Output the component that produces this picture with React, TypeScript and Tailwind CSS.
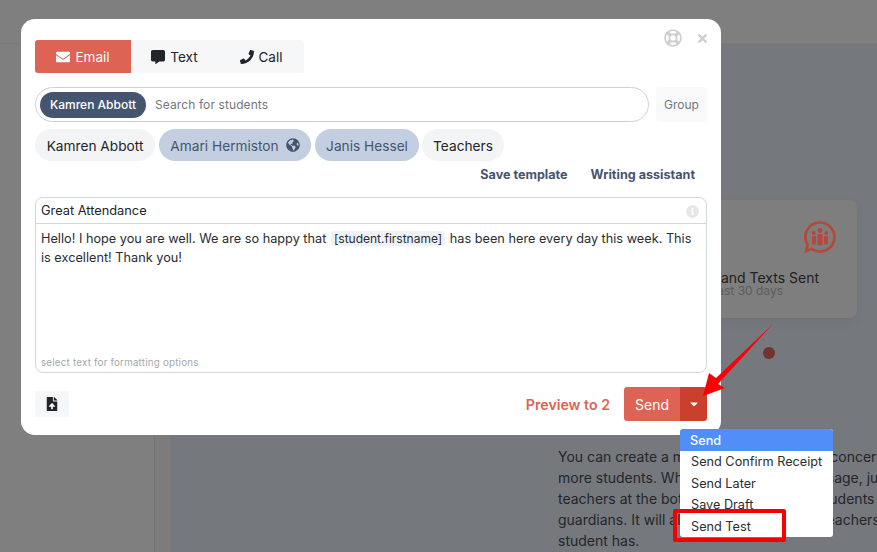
import React from "react";
import { FaEnvelope, FaCommentAlt, FaPhone, FaGlobeAmericas, FaRegLifeRing, FaTimes, FaFileUpload, FaCaretDown, FaInfoCircle } from "react-icons/fa";

const font = { fontFamily: "Inter, 'Liberation Sans', sans-serif" };

function CardIcon() {
  return (
    <svg width="32" height="32" viewBox="0 0 32 32" fill="none">
      <path d="M16 1.5a14.5 14.5 0 1 1-8.6 26.2L2 30l1.6-6.4A14.5 14.5 0 0 1 16 1.5z" stroke="#b4483a" strokeWidth="2.6" />
      <circle cx="16" cy="9.5" r="2.4" fill="#b4483a" />
      <circle cx="9.8" cy="12" r="1.9" fill="#b4483a" />
      <circle cx="22.2" cy="12" r="1.9" fill="#b4483a" />
      <rect x="13.4" y="13" width="5.2" height="11.5" rx="1.4" fill="#b4483a" />
      <rect x="8" y="15" width="4" height="8.5" rx="1.2" fill="#b4483a" />
      <rect x="20" y="15" width="4" height="8.5" rx="1.2" fill="#b4483a" />
    </svg>
  );
}

export default function App() {
  return (
    <div className="relative w-[877px] h-[552px] overflow-hidden bg-[#75787d] text-[#212529]" style={font}>
      {/* page behind the overlay */}
      <div className="h-[44px] bg-[#7f7f7f] border-b border-[#7a7a7c]" />
      <div className="flex h-[508px]">
        <div className="w-[155px] bg-[#7f7f7f] border-r border-[#747474]" />
        <div className="w-[15px] bg-[#7d7b7b]" />
        <div className="flex-1 flex flex-col items-end pr-[20px] pt-[155px] overflow-hidden">
          <div className="w-[400px] h-[118px] mt-[1px] rounded-lg bg-[#7e7e7e] shadow-[0_4px_12px_rgba(0,0,0,0.05)] flex flex-col items-end pr-[21px] pt-[21px] shrink-0">
            <CardIcon />
            <div className="mt-[16px] w-full pr-[17px] text-right text-[14px] leading-[18px] text-[#1f1f1f]">and Texts Sent</div>
            <div className="w-full pr-[53px] text-right text-[12px] leading-[8px] text-[#5d5d5d]">ast 30 days</div>
          </div>
          <div className="w-[12px] h-[12px] rounded-full bg-[#6f342e] mt-[29px] mr-[82px] shrink-0" />
          <div className="w-[299px] mt-[87px] text-[14px] leading-[21px] text-[#24262a] whitespace-nowrap shrink-0">
            <div>You can create a message to share a big concern</div>
            <div>more students. When you set a new message, just</div>
            <div>teachers at the bottom and choose the students</div>
            <div>guardians. It will also send out to all the teachers</div>
            <div>student has.</div>
          </div>
        </div>
      </div>

      {/* modal */}
      <div className="absolute left-[21px] top-[19px] w-[700px] h-[416px] bg-white rounded-[14px] px-[14px] pt-[21px]">
        <div className="absolute right-[12px] top-[10px] flex items-center gap-[14px] text-[#cfcfcf]">
          <FaRegLifeRing className="text-[18px]" />
          <FaTimes className="text-[13px]" />
        </div>

        <div className="flex w-[269px] h-[33px] rounded-[3px] bg-[#f6f7f9] text-[13.5px] overflow-hidden">
          <div className="w-[96px] pt-[1px] flex items-center justify-center gap-[5px] bg-[#dd6354] text-white">
            <FaEnvelope className="text-[14px]" /> Email
          </div>
          <div className="w-[87px] pt-[1px] flex items-center justify-center gap-[5px]">
            <FaCommentAlt className="text-[14px]" /> Text
          </div>
          <div className="w-[86px] pt-[1px] flex items-center justify-center gap-[5px]">
            <FaPhone className="text-[14px]" /> Call
          </div>
        </div>

        <div className="flex gap-[7px] mt-[14px]">
          <div className="w-[614px] h-[35px] rounded-full border border-[#ccd2dd] flex items-center pl-[4px]">
            <span className="h-[26px] w-[106px] rounded-full bg-[#45556f] text-white text-[12px] font-medium flex items-center justify-center">Kamren Abbott</span>
            <span className="ml-[9px] text-[12px] tracking-[0.1px] text-[#74777c]">Search for students</span>
          </div>
          <div className="w-[51px] h-[35px] rounded-[3px] bg-[#f8f9fb] text-[12px] text-[#74777c] flex items-center justify-center">Group</div>
        </div>

        <div className="flex gap-[4px] mt-[7px] text-[13.7px]">
          <span className="w-[120px] h-[32px] pt-[2px] rounded-full bg-[#f3f4f5] flex items-center justify-center">Kamren Abbott</span>
          <span className="w-[152px] h-[32px] pt-[2px] rounded-full bg-[#c3cfe0] text-[#45556f] flex items-center justify-center gap-[7px]">Amari Hermiston <FaGlobeAmericas className="text-[14px] -mt-[2px]" /></span>
          <span className="w-[104px] h-[32px] pt-[2px] rounded-full bg-[#c3cfe0] text-[#45556f] flex items-center justify-center">Janis Hessel</span>
          <span className="w-[82px] h-[32px] pt-[2px] -ml-[1px] rounded-full bg-[#f3f4f5] flex items-center justify-center">Teachers</span>
        </div>

        <div className="flex justify-end gap-[23px] pr-[12px] mt-[6px] text-[12.6px] leading-[16px] font-bold text-[#45556f]">
          <span>Save template</span>
          <span>Writing assistant</span>
        </div>

        <div className="w-[672px] h-[176px] mt-[14px] rounded-[8px] border border-[#d2d6de] flex flex-col">
          <div className="h-[26px] border-b border-[#d2d6de] flex items-center justify-between pl-[5px] pr-[7px] pt-[1px] text-[12.8px] text-[#212529]">
            <span>Great Attendance</span>
            <FaInfoCircle className="text-[13px] text-[#e6e6e6]" />
          </div>
          <div className="flex-1 px-[5px] pt-[5px] text-[12.72px] leading-[19px] text-[#2a2d31]">
            <div className="w-[655px]">Hello! I hope you are well. We are so happy that <span className="bg-[#eff1f5] rounded-[3px] px-[3px] mx-[1px] text-[12px]">[student.firstname]</span> has been here every day this week. This is excellent! Thank you!</div>
          </div>
          <div className="pl-[5px] pb-[2px] text-[9.8px] leading-[14px] tracking-[0.2px] text-[#a5a7aa]">select text for formatting options</div>
        </div>

        <div className="flex items-start justify-between mt-[14px]">
          <div className="mt-[4px] w-[34px] h-[26px] rounded-[3px] bg-[#f6f7f9] flex items-center justify-center">
            <FaFileUpload className="text-[14px] text-[#212529]" />
          </div>
          <div className="flex items-center">
            <span className="mr-[14px] pt-[1px] text-[14.2px] font-semibold text-[#dd6354]">Preview to 2</span>
            <div className="flex w-[83px] h-[34px] rounded-[3px] overflow-hidden text-white text-[14px]">
              <span className="w-[56px] bg-[#dd6354] flex items-center justify-center">Send</span>
              <span className="w-[27px] bg-[#cb402d] flex items-center justify-center"><FaCaretDown className="text-[12px]" /></span>
            </div>
          </div>
        </div>
      </div>

      {/* dropdown */}
      <div className="absolute left-[680px] top-[429px] w-[153px] h-[108px] bg-white rounded-[3px] overflow-hidden text-[12.7px] text-[#2a2d31]">
        <div className="h-[22px] pt-[1px] bg-[#4f8ff7] text-white px-[10px] flex items-center font-medium">Send</div>
        <div className="h-[21px] pt-[1px] px-[11px] flex items-center whitespace-nowrap">Send Confirm Receipt</div>
        <div className="h-[22px] pt-[1px] px-[11px] flex items-center">Send Later</div>
        <div className="h-[21px] pt-[1px] px-[11px] flex items-center">Save Draft</div>
        <div className="h-[22px] pt-[1px] px-[11px] flex items-center">Send Test</div>
      </div>

      {/* annotations */}
      <div className="absolute left-[673px] top-[509px] w-[113px] h-[33px] border-[4px] border-[#f30000] rounded-[2px]" />
      <svg className="absolute left-0 top-0" width="877" height="552" viewBox="0 0 877 552">
        <polygon points="773,324 716,378 709,373 703,396 725,388 718,384" fill="#fb0007" />
      </svg>
    </div>
  );
}
